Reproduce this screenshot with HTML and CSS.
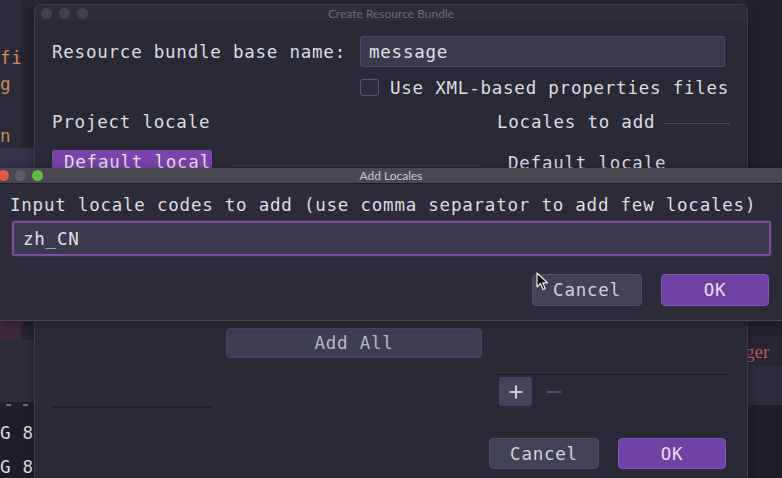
FILE: index.html
```html
<!DOCTYPE html>
<html>
<head>
<meta charset="utf-8">
<title>Add Locales</title>
<link rel="stylesheet" href="styles.css">
</head>
<body>
<div class="screen">
  <div class="strip-left">
    <div class="code-top">
      <div class="code-col">
        <div class="cl">fi</div>
        <div class="cl">g</div>
        <div class="cl">&nbsp;</div>
        <div class="cl">n</div>
      </div>
      <div class="gutter"></div>
    </div>
    <div class="sel-line"></div>
    <div class="under"></div>
    <div class="red-line"><div class="red-fill"></div><div class="gutter"></div></div>
    <div class="mid-line"></div>
    <div class="term">
      <div class="dashes"><span class="dash"></span><span class="dash"></span></div>
      <div class="tl">G 8</div>
      <div class="tl">G 8</div>
    </div>
  </div>
  <div class="strip-right">
    <div class="rt-top"></div>
    <div class="under"></div>
    <div class="rt-a"></div>
    <div class="rt-ger">ger</div>
    <div class="rt-b"></div>
    <div class="rt-c"></div>
  </div>

  <div class="win-back">
    <div class="back-title">
      <div class="dots"><span class="dot grey"></span><span class="dot grey"></span><span class="dot grey"></span></div>
      <div class="title-text dim">Create Resource Bundle</div>
    </div>
    <div class="back-body">
      <div class="row-name">
        <label class="lbl">Resource bundle base name:</label>
        <div class="field">message</div>
      </div>
      <div class="row-check">
        <span class="checkbox"></span>
        <span class="lbl">Use XML-based properties files</span>
      </div>
      <div class="cols row-heads">
        <div class="lbl">Project locale</div>
        <div class="head-right"><span class="lbl">Locales to add</span><span class="rule"></span></div>
      </div>
      <div class="cols row-items">
        <div class="left-items">
          <div class="sel-item">Default locale</div>
          <div class="split-line"></div>
        </div>
        <div class="lbl item-right">Default locale</div>
      </div>
      <div class="cols row-lower">
        <div class="left-lower">
          <div class="btn add-all">Add All</div>
          <div class="short-line"></div>
        </div>
        <div class="right-lower">
          <div class="list-line"></div>
          <div class="tools">
            <div class="tool-plus">
              <svg width="16" height="16" viewBox="0 0 16 16"><path d="M8 1.5v13M1.5 8h13" stroke="#cfcfd8" stroke-width="2.2" fill="none"/></svg>
            </div>
            <div class="tool-minus">
              <svg width="16" height="16" viewBox="0 0 16 16"><path d="M1 8h14" stroke="#55546a" stroke-width="2" fill="none"/></svg>
            </div>
          </div>
        </div>
      </div>
      <div class="row-buttons back-buttons">
        <div class="btn cancel">Cancel</div>
        <div class="btn ok">OK</div>
      </div>
    </div>
  </div>

  <div class="win-front">
    <div class="front-title">
      <div class="dots front-dots"><span class="dot red"></span><span class="dot grey2"></span><span class="dot green"></span></div>
      <div class="title-text">Add Locales</div>
    </div>
    <div class="front-body">
      <div class="lbl">Input locale codes to add (use comma separator to add few locales)</div>
      <div class="field focus">zh_CN</div>
      <div class="row-buttons front-buttons">
        <div class="btn cancel">Cancel</div>
        <div class="btn ok">OK</div>
      </div>
    </div>
  </div>

  <svg class="cursor" width="14" height="20" viewBox="0 0 14 20">
    <path d="M1 1 L1 15 L4.5 11.5 L7 17.5 L9.2 16.6 L6.8 10.8 L11.5 10.8 Z" fill="#111" stroke="#e8e8e8" stroke-width="1.2" stroke-linejoin="round"/>
  </svg>
</div>
</body>
</html>
```

FILE: styles.css
```css
* { box-sizing: border-box; margin: 0; padding: 0; }
html, body { width: 782px; height: 478px; overflow: hidden; }
body { background: #262532; font-family: "DejaVu Sans Mono", monospace; }

.screen {
  position: relative;
  width: 782px;
  height: 478px;
  display: flex;
  justify-content: space-between;
  overflow: hidden;
  background: #292835;
}

/* background IDE strips */
.strip-left { width: 34px; display: flex; flex-direction: column; }
.strip-left > div, .strip-right > div { flex-shrink: 0; }
.code-top { height: 148px; display: flex; background: #2b2a38; }
.code-col { width: 21px; padding-top: 45px; overflow: hidden; }
.cl {
  height: 26px; line-height: 26px;
  font-size: 17.5px; letter-spacing: 0.77px;
  color: #cf8a5e; white-space: nowrap;
}
.gutter { width: 13px; background: #25242f; }
.sel-line { height: 20px; background: #34334a; }
.under { height: 152px; background: #2b2a37; }
.red-line { height: 20px; display: flex; }
.red-fill { width: 21px; background: #3c2a39; }
.mid-line { height: 62px; background: #2d2c39; }
.strip-left > .term { flex: 1 1 auto; min-height: 0; background: #1f1e28; overflow: hidden; }
.dashes { height: 14px; display: flex; gap: 12px; padding: 2px 0 0 6px; }
.dash { display: block; width: 5px; height: 2px; background: #6e6d78; }
.tl {
  height: 34px; line-height: 34px;
  font-size: 17.5px; letter-spacing: 0.77px; color: #dcdce2; white-space: nowrap;
}

.strip-right { width: 34px; display: flex; flex-direction: column; }
.rt-top { height: 168px; background: #22212d; }
.rt-a { height: 18px; background: #242330; }
.rt-ger {
  height: 28px; line-height: 28px; background: #272532;
  font-family: "Liberation Serif", serif; font-size: 19px; color: #b65a60;
  margin-left: -3px; white-space: nowrap;
}
.rt-b { height: 39px; background: #2c2b39; }
.strip-right > .rt-c { flex: 1 1 auto; background: #1f1e29; }

/* common */
.lbl {
  font-size: 17.5px; letter-spacing: 0.77px; color: #dcdce2; white-space: nowrap;
}
.dots { position: absolute; left: 6px; top: 0; height: 100%; display: flex; align-items: center; gap: 7px; }
.dot { width: 11px; height: 11px; border-radius: 50%; display: block; }
.dot.grey { background: #44434c; }
.dot.grey2 { background: #5d5c63; }
.dot.red { background: #e4574c; }
.dot.green { background: #5fbd3d; }
.title-text {
  font-family: Lato, "Liberation Sans", sans-serif; font-size: 12px; color: #c9c8cf;
}
.title-text.dim { color: #6e6d77; font-size: 12px; }

.field {
  background: #3a394d;
  border: 1px solid #4a495e;
  border-radius: 2px;
  font-size: 17.5px; letter-spacing: 0.77px; color: #e0e0e6;
  display: flex; align-items: center; padding-left: 8px;
}
.btn {
  display: flex; align-items: center; justify-content: center;
  font-size: 17.5px; letter-spacing: 0.77px; border-radius: 4px;
}
.btn.cancel { background: #424155; border: 1px solid #4f4e62; color: #d2d2da; width: 110px; }
.btn.ok { background: #6d41a2; border: 1px solid #8552b9; color: #e6def0; width: 108px; }
.row-buttons { display: flex; justify-content: flex-end; gap: 19px; }

/* back window */
.win-back {
  position: absolute; left: 34px; top: 4px;
  width: 714px; height: 486px;
  background: #2a2936;
  border: 1px solid #3c3b49;
  border-radius: 6px 6px 0 0;
  box-shadow: 0 0 8px rgba(0,0,0,0.35);
}
.back-title {
  position: relative; height: 16px;
  display: flex; align-items: center; justify-content: center;
  background: #2d2c38; border-radius: 6px 6px 0 0;
}
.back-title .dots { left: 6px; gap: 7px; }
.back-body { padding: 15px 17px 0 17px; }
.row-name { display: grid; grid-template-columns: 308px 365px; height: 31px; align-items: center; }
.row-name .field { height: 31px; }
.row-check { display: flex; align-items: center; height: 17px; margin-top: 12px; padding-left: 308px; gap: 11px; }
.checkbox { width: 19px; height: 17px; border: 1.5px solid #59586a; border-radius: 3px; background: #2e2d3b; display: block; }

.cols { display: grid; grid-template-columns: 430px 234px; column-gap: 14px; }
.row-heads { margin-top: 16px; height: 18px; align-items: center; }
.head-right { display: flex; align-items: center; gap: 8px; padding-left: 1px; }
.rule { flex: 1; height: 1px; background: #4a495a; margin-top: 2px; }

.row-items { margin-top: 20px; height: 28px; }
.left-items { display: flex; align-items: flex-start; }
.sel-item {
  width: 160px; height: 28px; overflow: hidden; white-space: nowrap;
  background: #7a44ab; color: #e6def0;
  font-size: 17.5px; letter-spacing: 0.77px; padding: 2px 0 0 12px;
  border-radius: 2px 2px 0 0;
}
.split-line { margin: 15px 0 0 20px; width: 248px; height: 1px; background: #3d3c4c; }
.item-right { padding-left: 12px; padding-top: 3px; }

.row-lower { margin-top: 150px; align-items: start; }
.left-lower { display: flex; flex-direction: column; }
.add-all {
  margin-left: 174px; width: 256px; height: 30px;
  background: #3e3d52; border: 1px solid #47465c; color: #b9b8c6;
}
.short-line { margin-top: 48px; width: 160px; height: 2px; background: #1f1e27; }
.right-lower { display: flex; flex-direction: column; }
.list-line { margin-top: 46px; height: 1px; background: #1b1a22; }
.tools { display: flex; align-items: center; margin-top: 2px; padding-left: 3px; gap: 6px; }
.tool-plus {
  width: 33px; height: 29px; background: #45445a; border-radius: 3px;
  display: flex; align-items: center; justify-content: center;
}
.tool-minus { width: 32px; height: 29px; display: flex; align-items: center; justify-content: center; }

.back-buttons { margin-top: 30px; padding-right: 4px; }
.back-buttons .btn { height: 31px; }
.back-buttons .btn.ok { background: #6f43a3; }

/* front window */
.win-front {
  position: absolute; left: 0; top: 168px;
  width: 782px; height: 153px;
  background: #2c2b37;
  border-bottom: 1px solid #4a4956;
  box-shadow: 0 2px 10px rgba(0,0,0,0.4);
}
.front-title {
  position: relative; height: 16px;
  display: flex; align-items: center; justify-content: center;
  background: #4a4951;
  border-bottom: 1px solid #1d1c23;
}
.front-dots { left: -2px; gap: 6px; }
.front-body { padding: 11px 11px 0 10px; }
.front-body > .lbl { height: 20px; line-height: 20px; }
.field.focus {
  margin-top: 6px; margin-left: 2px; height: 35px;
  border: 2px solid #7c4c9e; background: #3b3a4c;
  box-shadow: 0 0 2px rgba(140,80,180,0.6);
  padding-left: 9px;
}
.front-buttons { margin-top: 18px; padding-right: 2px; }
.front-buttons .btn { height: 32px; }

.cursor { position: absolute; left: 536px; top: 272px; }
```
